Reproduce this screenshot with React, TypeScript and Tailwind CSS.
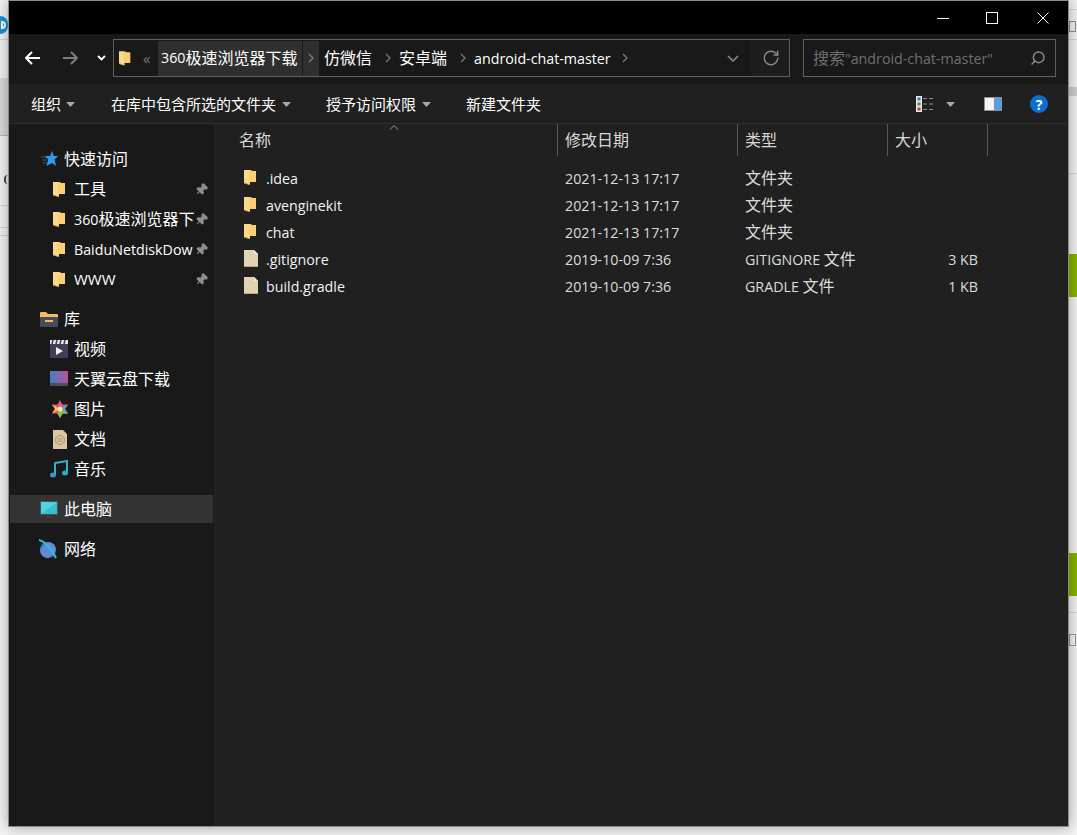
import type { ReactNode } from "react";
import { Pin, RotateCw, Search } from "lucide-react";

const FONT = "font-['Open_Sans','Noto_Sans_CJK_SC',sans-serif]";

// latin runs are a little smaller than the CJK ones next to them
function L({ children }: { children: ReactNode }) {
  return <span className="text-[14.25px]">{children}</span>;
}

function FolderIcon() {
  return (
    <svg width="15" height="17" viewBox="0 0 15 17">
      <path d="M0 1h6l1 1h5v11H6v3l-6-2z" fill="#f4c063" />
      <path d="M6 1h1l1 1h4v11H6z" fill="#fccf72" />
      <path d="M0 1h5.500v14.500L0 14z" fill="#fbd98a" />
      <path d="M0 13.500l5.500 2V16L0 14.500z" fill="#c98f34" />
    </svg>
  );
}

function FileIcon() {
  return (
    <svg width="16" height="19" viewBox="0 0 16 19">
      <path d="M1 1h10l4 4v13H1z" fill="#e2d3b5" />
      <path d="M11 1l4 4h-4z" fill="#f3ead6" />
      <path d="M1 17h14v1H1z" fill="#b9a988" />
    </svg>
  );
}

function StarIcon() {
  return (
    <svg width="17" height="16" viewBox="0 0 17 16">
      <path d="M11 0l1.700 5H17l-3.500 3.400L15 15l-4-3L5.500 15l1.700-6.600L4 5h5z" fill="#2e9bf0" />
      <path d="M0 6h5M1 9h5M2 12h4" stroke="#2e9bf0" strokeWidth="1" opacity="0.55" />
    </svg>
  );
}

function LibraryIcon() {
  return (
    <svg width="18" height="17" viewBox="0 0 18 17">
      <path d="M0 2a1 1 0 011-1h5l2 2h9a1 1 0 011 1v3H0z" fill="#f5bb5c" />
      <rect x="0" y="6" width="18" height="10" rx="1" fill="#454a5c" />
      <rect x="5" y="9" width="8" height="2" fill="#f5bb5c" />
    </svg>
  );
}

function VideoIcon() {
  return (
    <svg width="18" height="18" viewBox="0 0 18 18">
      <rect x="0" y="0" width="18" height="18" rx="1" fill="#453d58" />
      <path d="M0 0h18v4H0z" fill="#e8e4ee" />
      <path d="M3 0l-1 4M7 0L6 4M11 0l-1 4M15 0l-1 4" stroke="#453d58" strokeWidth="1.500" />
      <path d="M6 7l7 4-7 4z" fill="#f2f2f2" />
    </svg>
  );
}

function CloudFolderIcon() {
  return (
    <svg width="18" height="16" viewBox="0 0 18 16">
      <defs>
        <linearGradient id="cloud" x1="0" y1="0" x2="1" y2="0">
          <stop offset="0" stopColor="#3f7fc9" />
          <stop offset="1" stopColor="#b8529a" />
        </linearGradient>
      </defs>
      <rect width="18" height="15" fill="url(#cloud)" />
      <rect y="12" width="18" height="3" fill="#4b4e5c" />
    </svg>
  );
}

function PhotoIcon() {
  return (
    <svg width="16" height="18" viewBox="0 0 16 18">
      <path d="M8 0l2.500 4.500H16L13 9l3 4.500h-5.500L8 18l-2.500-4.500H0L3 9 0 4.500h5.500z" fill="#e0557f" />
      <path d="M8 9l8-4.500L13 9l3 4.500z" fill="#4aa3df" />
      <path d="M8 9l2.500 4.500H16L8 9zM8 9L5.500 13.500 8 18l2.500-4.500z" fill="#8cc63f" />
      <path d="M8 9L0 13.500 3 9 0 4.500z" fill="#f6c23e" />
      <circle cx="8" cy="9" r="2.500" fill="#f5e9a8" />
    </svg>
  );
}

function DocIcon() {
  return (
    <svg width="16" height="19" viewBox="0 0 16 19">
      <path d="M1 0h10l4 4v15H1z" fill="#dcc6a0" />
      <circle cx="8" cy="10" r="4.500" fill="none" stroke="#ab9877" />
      <path d="M5.500 8.500h5M5.500 10h5M5.500 11.500h5" stroke="#ab9877" strokeWidth="0.800" />
    </svg>
  );
}

function MusicIcon() {
  return (
    <svg width="18" height="18" viewBox="0 0 18 18">
      <path d="M5 15V3l12-2v12" fill="none" stroke="#2fb4c9" strokeWidth="2" />
      <ellipse cx="3" cy="15" rx="3" ry="2.500" fill="#3f8fd6" />
      <ellipse cx="15" cy="13" rx="3" ry="2.500" fill="#2fa7d0" />
    </svg>
  );
}

function PcIcon() {
  return (
    <svg width="18" height="17" viewBox="0 0 18 17">
      <rect width="18" height="14" rx="1" fill="#4a4f5a" />
      <path d="M1 1h16v12H1z" fill="#35c0cf" />
      <path d="M1 1h16L1 13z" fill="#4fd3e0" />
      <rect x="6" y="15" width="6" height="1.500" fill="#3d4048" />
    </svg>
  );
}

function NetworkIcon() {
  return (
    <svg width="20" height="20" viewBox="0 0 20 20">
      <circle cx="10" cy="11" r="8" fill="#3f7fd0" />
      <path d="M10 3a8 8 0 018 8l-8 8a8 8 0 01-8-8z" fill="#7c8fd8" opacity="0.6" />
      <path d="M1 1c5 1 13 9 17 18" fill="none" stroke="#2cc0d8" strokeWidth="2" />
    </svg>
  );
}

function Caret() {
  return (
    <svg width="9" height="5" viewBox="0 0 9 5">
      <path d="M0 0h9L4.500 5z" fill="#a8a8a8" />
    </svg>
  );
}

function Chevron() {
  return (
    <svg width="6" height="10" viewBox="0 0 6 10">
      <path d="M1 1l4 4-4 4" fill="none" stroke="#7a7a7a" strokeWidth="1.300" />
    </svg>
  );
}

function ViewIcon() {
  return (
    <svg width="18" height="16" viewBox="0 0 18 16">
      <rect x="0" y="0" width="6" height="16" fill="#e6e6e6" />
      <rect x="1.500" y="1.500" width="3" height="3" fill="#3a7cc4" />
      <rect x="1.500" y="6.500" width="3" height="3" fill="#4a8f4a" />
      <rect x="1.500" y="11.500" width="3" height="3" fill="#c43a3a" />
      <path d="M7 2.500h4M13 2.500h4M7 8h4M13 8h4M7 13.500h4M13 13.500h4" stroke="#8a8a8a" />
    </svg>
  );
}

function PaneIcon() {
  return (
    <svg width="18" height="14" viewBox="0 0 18 14">
      <rect width="18" height="14" fill="#8f8f8f" />
      <rect x="1" y="1" width="9" height="12" fill="#f5f5f5" />
      <rect x="11" y="1" width="6" height="12" fill="#4da3ea" />
    </svg>
  );
}

const quickAccess: ReactNode[] = [
  "工具",
  <><L>360</L>极速浏览器下</>,
  <L>BaiduNetdiskDow</L>,
  <span className="text-[15px]">WWW</span>,
];

const libraries: { name: string; icon: ReactNode }[] = [
  { name: "视频", icon: <VideoIcon /> },
  { name: "天翼云盘下载", icon: <CloudFolderIcon /> },
  { name: "图片", icon: <PhotoIcon /> },
  { name: "文档", icon: <DocIcon /> },
  { name: "音乐", icon: <MusicIcon /> },
];

const files = [
  { name: ".idea", date: "2021-12-13 17:17", type: "", size: "", folder: true },
  { name: "avenginekit", date: "2021-12-13 17:17", type: "", size: "", folder: true },
  { name: "chat", date: "2021-12-13 17:17", type: "", size: "", folder: true },
  { name: ".gitignore", date: "2019-10-09 7:36", type: "GITIGNORE ", size: "3 KB", folder: false },
  { name: "build.gradle", date: "2019-10-09 7:36", type: "GRADLE ", size: "1 KB", folder: false },
];

function NavTop({ icon, label, active }: { icon: ReactNode; label: string; active?: boolean }) {
  return (
    <div className={`mt-[10px] flex h-[30px] items-center ${active ? "border border-[#191919] bg-[#333333]" : ""}`}>
      <span className={`flex justify-end pr-[6px] ${active ? "w-[54px]" : "w-[55px]"}`}>{icon}</span>
      <span>{label}</span>
    </div>
  );
}

function NavChild({ icon, label, pinned }: { icon: ReactNode; label: ReactNode; pinned?: boolean }) {
  return (
    <div className="flex h-[30px] items-center">
      <span className="flex w-[65px] shrink-0 justify-end pr-[6px]">{icon}</span>
      <span className="w-[120px] whitespace-nowrap">{label}</span>
      {pinned && <Pin size={13} className="ml-[1px] rotate-45 fill-[#8f8f8f] text-[#8f8f8f]" />}
    </div>
  );
}

export default function App() {
  return (
    <div className={`relative h-[835px] w-[1077px] overflow-hidden bg-[#f4f4f4] ${FONT}`}>
      {/* bits of the page behind the window */}
      <div className="absolute left-0 top-[39px] h-px w-[8px] bg-[#d8d8d8]" />
      <div className="absolute left-0 top-[16px] flex h-[18px] w-[8px] items-center rounded-r-full bg-[#1296db]">
        <span className="ml-[1px] h-[8px] w-[5px] rounded-r-full border-2 border-white" />
      </div>
      <div className="absolute left-0 top-[78px] h-[58px] w-[8px] border-b border-[#bcbcbc] bg-[#dcdcdc]" />
      <div className="absolute left-[4px] top-[175px] h-[9px] w-[4px] rounded-l-full border-l-2 border-[#3b4a63]" />
      <div className="absolute left-0 top-[205px] h-px w-[8px] bg-[#d8d8d8]" />
      <div className="absolute left-0 top-[227px] h-px w-[8px] bg-[#d8d8d8]" />
      <div className="absolute left-0 top-[235px] h-px w-[8px] bg-[#d8d8d8]" />
      <div className="absolute right-0 top-[9px] h-px w-[8px] bg-[#d8d8d8]" />
      <div className="absolute right-[1px] top-[21px] h-[11px] w-[7px] border border-[#8f8f8f]" />
      <div className="absolute right-0 top-[39px] h-px w-[8px] bg-[#d8d8d8]" />
      <div className="absolute right-0 top-[87px] h-[9px] w-[8px] bg-[#cfcfcf]" />
      <div className="absolute right-0 top-[173px] h-px w-[8px] bg-[#d8d8d8]" />
      <div className="absolute right-0 top-[254px] h-[43px] w-[9px] bg-[#86b300]" />
      <div className="absolute right-0 top-[553px] h-[43px] w-[9px] bg-[#86b300]" />
      <div className="absolute right-0 top-[612px] h-px w-[9px] bg-[#d8d8d8]" />
      <div className="absolute right-[1px] top-[634px] h-[12px] w-[7px] border border-[#999999]" />

      <div className="relative ml-[8px] flex h-[827px] w-[1061px] flex-col border border-[#8a8a8a] bg-[#191919] text-[16px] text-white shadow-[0_0_14px_rgba(0,0,0,0.35)]">
        {/* title bar */}
        <div className="flex h-[33px] shrink-0 items-center justify-end bg-black pr-[19px]">
          <svg width="12" height="12" viewBox="0 0 12 12">
            <path d="M0 6.500h12" stroke="#ffffff" />
          </svg>
          <svg width="12" height="12" viewBox="0 0 12 12" className="ml-[37px]">
            <rect x="0.500" y="0.500" width="11" height="11" fill="none" stroke="#ffffff" />
          </svg>
          <svg width="12" height="12" viewBox="0 0 12 12" className="ml-[39px]">
            <path d="M0.500 0.500l11 11M11.500 0.500l-11 11" stroke="#ffffff" />
          </svg>
        </div>

        {/* address row */}
        <div className="flex h-[50px] shrink-0 items-center bg-[#191919] pb-[2px]">
          <svg width="16" height="14" viewBox="0 0 16 14" className="ml-[16px]">
            <path d="M1 7h14M7 1L1 7l6 6" fill="none" stroke="#ffffff" strokeWidth="2" />
          </svg>
          <svg width="16" height="14" viewBox="0 0 16 14" className="ml-[22px]">
            <path d="M0 7h14M8 1l6 6-6 6" fill="none" stroke="#7d7d7d" strokeWidth="2" />
          </svg>
          <svg width="9" height="6" viewBox="0 0 9 6" className="ml-[18px]">
            <path d="M1 1l3.500 3.500L8 1" fill="none" stroke="#ffffff" strokeWidth="1.800" />
          </svg>
          <div className="ml-[7px] flex h-[38px] w-[677px] items-center border border-[#5f5f5f]">
            <span className="ml-[5px] flex w-[14px]"><FolderIcon /></span>
            <span className="ml-[10px] w-[14px] text-[15px] text-[#7a7a7a]">«</span>
            <div className="ml-[1px] flex h-[35px] items-center">
              <span className="flex h-full w-[144px] items-center bg-[#2f2f2f] pl-[3px]"><L>360</L>极速浏览器下载</span>
              <span className="ml-px flex h-full w-[16px] items-center justify-center bg-[#2f2f2f]"><Chevron /></span>
            </div>
            <span className="ml-[5px]">仿微信</span>
            <span className="ml-[13px]"><Chevron /></span>
            <span className="ml-[8px]">安卓端</span>
            <span className="ml-[13px]"><Chevron /></span>
            <span className="ml-[8px]"><L>android-chat-master</L></span>
            <span className="ml-[11px]"><Chevron /></span>
            <svg width="12" height="7" viewBox="0 0 12 7" className="ml-[99px]">
              <path d="M1 1l5 5 5-5" fill="none" stroke="#8a8a8a" strokeWidth="1.600" />
            </svg>
            <div className="ml-auto flex h-full w-[38px] items-center justify-center bg-[#1d1d1d] pl-px">
              <RotateCw size={18} strokeWidth={1.8} className="text-[#8a8a8a]" />
            </div>
          </div>
          <div className="ml-[13px] flex h-[38px] w-[253px] items-center border border-[#5f5f5f] px-[9px] text-[#6f6f6f]">
            <span>搜索<L>"android-chat-master"</L></span>
            <Search size={16} strokeWidth={2.2} className="ml-auto -scale-x-100 text-[#8a8a8a]" />
          </div>
        </div>

        {/* command bar */}
        <div className="flex h-[40px] shrink-0 items-center border-b border-[#2e2e2e] bg-[#202020] pt-px text-[15px]">
          <span className="ml-[22px]">组织</span>
          <span className="ml-[5px]"><Caret /></span>
          <span className="ml-[36px]">在库中包含所选的文件夹</span>
          <span className="ml-[6px]"><Caret /></span>
          <span className="ml-[35px]">授予访问权限</span>
          <span className="ml-[6px]"><Caret /></span>
          <span className="ml-[35px]">新建文件夹</span>
          <span className="ml-auto"><ViewIcon /></span>
          <span className="ml-[12px]"><Caret /></span>
          <span className="ml-[29px]"><PaneIcon /></span>
          <span className="ml-[28px] mr-[20px] flex h-[18px] w-[18px] items-center justify-center rounded-full bg-[#0a6fd0] text-[14px] font-bold">?</span>
        </div>

        <div className="flex min-h-0 flex-1">
          {/* nav pane */}
          <div className="w-[205px] shrink-0 bg-[#191919] pt-[10px]">
            <NavTop icon={<StarIcon />} label="快速访问" />
            {quickAccess.map((label, i) => (
              <NavChild key={i} icon={<FolderIcon />} label={label} pinned />
            ))}
            <NavTop icon={<LibraryIcon />} label="库" />
            {libraries.map((l) => (
              <NavChild key={l.name} icon={l.icon} label={l.name} />
            ))}
            <NavTop icon={<PcIcon />} label="此电脑" active />
            <NavTop icon={<NetworkIcon />} label="网络" />
          </div>
          <div className="w-[2px] shrink-0 bg-[#222222]" />

          {/* file list */}
          <div className="relative min-w-0 flex-1 bg-[#202020]">
            <svg width="10" height="5" viewBox="0 0 10 5" className="absolute left-[173px] top-[1px]">
              <path d="M1 4.500l4-4 4 4" fill="none" stroke="#9a9a9a" />
            </svg>
            <div className="flex h-[32px] items-center text-[#d8d8d8]">
              <div className="flex h-full w-[342px] items-center border-r border-[#5a5a5a] pl-[23px]">名称</div>
              <div className="flex h-full w-[180px] items-center border-r border-[#5a5a5a] pl-[7px]">修改日期</div>
              <div className="flex h-full w-[150px] items-center border-r border-[#5a5a5a] pl-[7px]">类型</div>
              <div className="flex h-full w-[100px] items-center border-r border-[#5a5a5a] pl-[7px]">大小</div>
            </div>
            <div className="pt-[8px]">
              {files.map((f) => (
                <div key={f.name} className="flex h-[27px] items-center">
                  <span className="flex w-[50px] shrink-0 justify-end pr-[7px]">
                    {f.folder ? <FolderIcon /> : <FileIcon />}
                  </span>
                  <span className="w-[299px] text-[#f2f2f2]"><L>{f.name}</L></span>
                  <span className="w-[180px] text-[#dcdcdc]"><L>{f.date}</L></span>
                  <span className="w-[150px] text-[#dcdcdc]">
                    {f.folder ? "文件夹" : <><L>{f.type}</L>文件</>}
                  </span>
                  <span className="w-[83px] text-right text-[#dcdcdc]"><L>{f.size}</L></span>
                </div>
              ))}
            </div>
          </div>
        </div>
      </div>
    </div>
  );
}
